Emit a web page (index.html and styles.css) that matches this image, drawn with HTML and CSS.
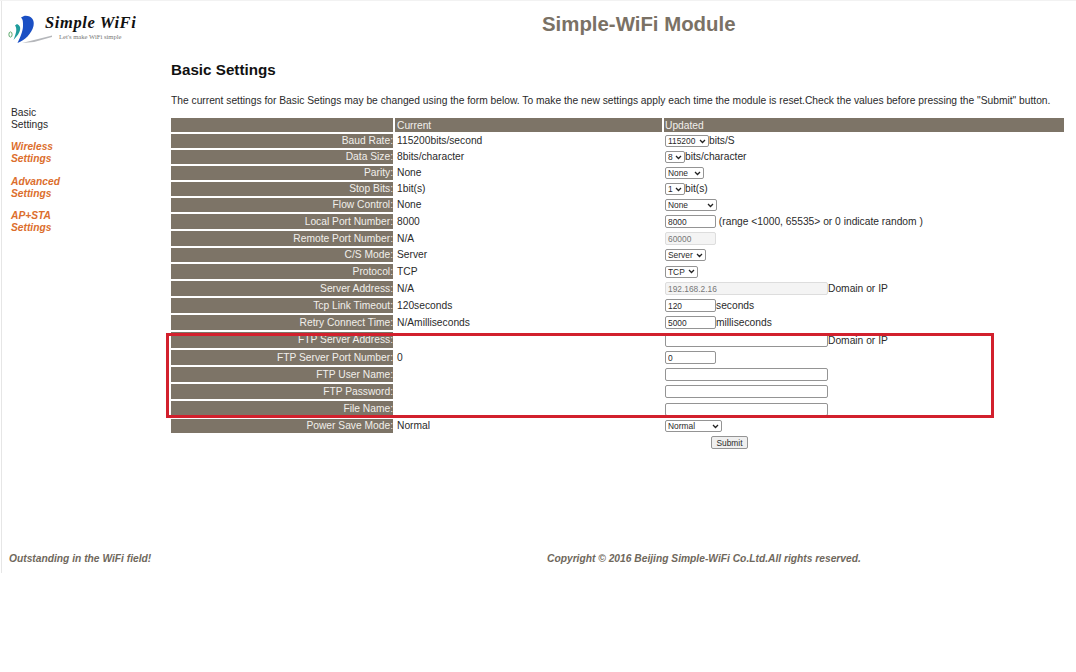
FILE: index.html
```html
<!DOCTYPE html>
<html lang="en">
<head>
<meta charset="utf-8">
<title>Simple-WiFi Module</title>
<link rel="stylesheet" href="styles.css">
</head>
<body>
<div class="frame">
  <header class="top">
    <svg class="logo" viewBox="0 0 136 44" width="136" height="44" role="img" aria-label="Simple WiFi">
      <path d="M22 42 L52 34.500 L52 36 L34 41 Z" fill="#b5b7bb"/>
      <path d="M24 15 C31 14 35 19 33.500 25 C31.500 33 25 39 17.500 42 C20 37 23 30 23 25 C23 21 23 18 21 16.500 Z" fill="#1a4fc4"/>
      <path d="M17 23 C22 25 21.500 31 13.500 39 C16 32.500 17.500 28 15 24.500 Z" fill="#1f9c9c"/>
      <ellipse cx="10.500" cy="33.500" rx="1.600" ry="2.600" fill="none" stroke="#5aa86a" stroke-width="1"/>
      <text class="logo-name" x="45" y="27">Simple WiFi</text>
      <text class="logo-tag" x="59" y="38">Let's make WiFi simple</text>
    </svg>
    <h1 class="title">Simple-WiFi Module</h1>
  </header>
  <div class="body">
    <nav class="nav">
      <a class="nav-item current">Basic<br>Settings</a>
      <a class="nav-item">Wireless<br>Settings</a>
      <a class="nav-item">Advanced<br>Settings</a>
      <a class="nav-item">AP+STA<br>Settings</a>
    </nav>
    <main class="content">
      <h2 class="heading">Basic Settings</h2>
      <p class="intro">The current settings for Basic Setings may be changed using the form below. To make the new settings apply each time the module is reset.Check the values before pressing the "Submit" button.</p>
      <div class="table-wrap">
        <table class="settings">
          <colgroup><col class="c1"><col class="c2"><col class="c3"></colgroup>
          <tr class="h14 head"><th></th><th class="left">Current</th><th class="left updated">Updated</th></tr>
          <tr class="h14"><th>Baud Rate:</th><td>115200bits/second</td><td><select class="s43"><option>115200</option></select>bits/S</td></tr>
          <tr class="h14"><th>Data Size:</th><td>8bits/character</td><td><select class="s20"><option>8</option></select>bits/character</td></tr>
          <tr class="h14"><th>Parity:</th><td>None</td><td><select class="s39"><option>None</option></select></td></tr>
          <tr class="h14"><th>Stop Bits:</th><td>1bit(s)</td><td><select class="s20"><option>1</option></select>bit(s)</td></tr>
          <tr class="h14"><th>Flow Control:</th><td>None</td><td><select class="s52"><option>None</option></select></td></tr>
          <tr class="h15"><th>Local Port Number:</th><td>8000</td><td><input class="short" value="8000"> (range &lt;1000, 65535&gt; or 0 indicate random )</td></tr>
          <tr class="h15"><th>Remote Port Number:</th><td>N/A</td><td><input class="short" value="60000" disabled></td></tr>
          <tr class="h14"><th>C/S Mode:</th><td>Server</td><td><select class="s40"><option>Server</option></select></td></tr>
          <tr class="h15"><th>Protocol:</th><td>TCP</td><td><select class="s33"><option>TCP</option></select></td></tr>
          <tr class="h15"><th>Server Address:</th><td>N/A</td><td><input class="long" value="192.168.2.16" disabled>Domain or IP</td></tr>
          <tr class="h15"><th>Tcp Link Timeout:</th><td>120seconds</td><td><input class="short" value="120">seconds</td></tr>
          <tr class="h15"><th>Retry Connect Time:</th><td>N/Amilliseconds</td><td><input class="short" value="5000">milliseconds</td></tr>
          <tr class="h16"><th>FTP Server Address:</th><td></td><td><input class="long">Domain or IP</td></tr>
          <tr class="h15"><th>FTP Server Port Number:</th><td>0</td><td><input class="short" value="0"></td></tr>
          <tr class="h15"><th>FTP User Name:</th><td></td><td><input class="long"></td></tr>
          <tr class="h15"><th>FTP Password:</th><td></td><td><input class="long" type="password"></td></tr>
          <tr class="h16"><th>File Name:</th><td></td><td><input class="long"></td></tr>
          <tr class="h14"><th>Power Save Mode:</th><td>Normal</td><td><select class="s57"><option>Normal</option></select></td></tr>
          <tr class="h15 plain"><td></td><td></td><td class="submit-cell"><button class="submit" type="button">Submit</button></td></tr>
        </table>
        <div class="highlight"></div>
      </div>
    </main>
  </div>
  <footer class="foot">
    <span class="slogan">Outstanding in the WiFi field!</span>
    <span class="copy">Copyright © 2016 Beijing Simple-WiFi Co.Ltd.All rights reserved.</span>
  </footer>
</div>
</body>
</html>
```

FILE: styles.css
```css
* { box-sizing: border-box; }
html, body { margin: 0; padding: 0; background: #fff; }
body {
  width: 1076px;
  height: 672px;
  overflow: hidden;
  font-family: "Liberation Sans", Arial, sans-serif;
  font-size: 10.25px;
  color: #2a2a2a;
  border-top: 1px solid #f2f2f2;
}
.frame {
  margin-left: 1px;
  width: 1075px;
  height: 572px;
  border-left: 1px solid #e6e6e6;
  display: flex;
  flex-direction: column;
}
.top { display: flex; height: 45px; flex: none; }
.logo { display: block; flex: none; margin-left: -2px; }
.logo-name {
  font-family: "Liberation Serif", serif;
  font-style: italic;
  font-weight: 700;
  font-size: 16.5px;
  letter-spacing: 0.6px;
  fill: #111;
}
.logo-tag { font-family: "Liberation Serif", serif; font-size: 6.6px; fill: #777; }
.title {
  margin: 12px 0 0 406px;
  font-size: 20.4px;
  line-height: 23px;
  font-weight: 700;
  color: #7a7165;
  white-space: nowrap;
}
.body { display: flex; flex: 1; min-height: 0; }
.nav {
  width: 168px;
  flex: none;
  padding: 61px 0 0 9px;
  display: flex;
  flex-direction: column;
  gap: 11px;
}
.nav-item {
  display: block;
  line-height: 11.7px;
  font-weight: 700;
  font-style: italic;
  color: #dc6e2d;
}
.nav-item.current { font-weight: 400; font-style: normal; color: #2a2a2a; }
.content { flex: 1; min-width: 0; }
.heading {
  margin: 15px 0 0 1px;
  font-size: 15.2px;
  line-height: 17px;
  font-weight: 700;
  color: #111;
}
.intro { margin: 17px 0 0 1px; line-height: 12px; white-space: nowrap; }
.table-wrap { position: relative; }
.settings {
  table-layout: fixed;
  width: 897px;
  margin: 9px 0 0 -1px;
  border-collapse: separate;
  border-spacing: 2px;
  line-height: 12px;
}
.c1 { width: 222px; }
.c2 { width: 267px; }
.c3 { width: 400px; }
.settings th, .settings td { padding: 0; vertical-align: middle; white-space: nowrap; overflow: hidden; }
.settings td { padding-left: 2px; }
.settings td:last-child { padding-left: 1px; }
.settings th { background: #7d7467; color: #f1efeb; font-weight: 400; text-align: right; }
.settings th.left { text-align: left; padding: 1px 0 0 2px; }
.settings th.updated { padding-left: 1px; }
.h14 { height: 14px; }
.h15 { height: 15px; }
.h16 { height: 16px; }
select, input, .submit {
  font-family: "Liberation Sans", Arial, sans-serif;
  font-size: 8.4px;
  color: #2a2a2a;
  margin: 0;
}
select {
  appearance: none;
  vertical-align: middle;
  height: 12px;
  padding: 0 0 0 2px;
  border: 1px solid #949494;
  border-radius: 2px;
  background-color: #fff;
  background-image: url("data:image/svg+xml,%3Csvg xmlns='http://www.w3.org/2000/svg' width='7' height='5'%3E%3Cpath d='M1 1 L3.500 3.500 L6 1' fill='none' stroke='%23222' stroke-width='1.300'/%3E%3C/svg%3E");
  background-repeat: no-repeat;
  background-position: right 2px center;
}
.s20 { width: 20px; }
.s33 { width: 33px; }
.s39 { width: 39px; }
.s40 { width: 41px; }
.s43 { width: 44px; }
.s52 { width: 52px; }
.s57 { width: 57px; }
input {
  height: 13px;
  padding: 0 2px;
  border: 1px solid #949494;
  border-radius: 2px;
  background: #fff;
  display: inline-block;
  vertical-align: baseline;
}
input:disabled { background: #f4f4f4; border-color: #ddd; color: #777; }
.short { width: 51px; }
.long { width: 163px; }
.settings td.submit-cell { padding-left: 47px; }
.submit {
  display: block;
  width: 37px;
  height: 13px;
  padding: 0;
  border: 1px solid #949494;
  border-radius: 2px;
  background: #efefef;
}
.highlight {
  position: absolute;
  left: -4px;
  top: 217px;
  width: 828px;
  height: 85px;
  border: 3px solid #d2202d;
  pointer-events: none;
}
.foot {
  flex: none;
  height: 20px;
  display: flex;
  font-weight: 700;
  font-style: italic;
  color: #6f685c;
  line-height: 12px;
}
.slogan { width: 545px; padding-left: 7px; flex: none; }
.copy { white-space: nowrap; }
```
